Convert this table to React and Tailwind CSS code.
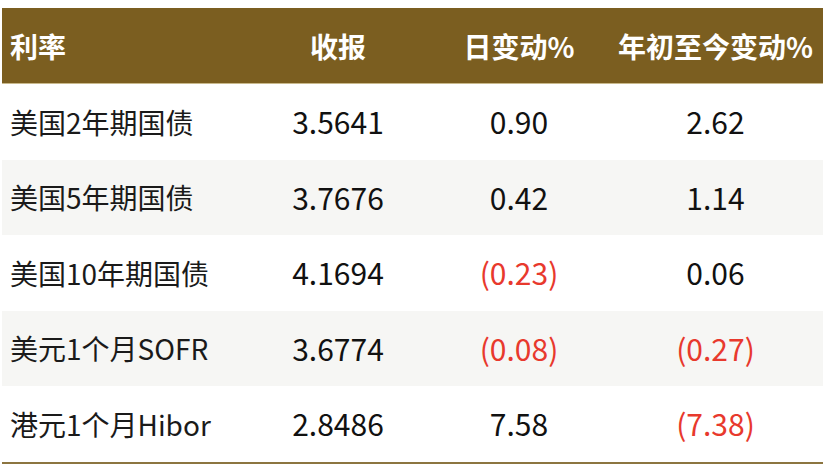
export default function App() {
  const rows = [
    { name: "美国2年期国债", v: "3.5641", d: "0.90", y: "2.62", dn: false, yn: false },
    { name: "美国5年期国债", v: "3.7676", d: "0.42", y: "1.14", dn: false, yn: false },
    { name: "美国10年期国债", v: "4.1694", d: "(0.23)", y: "0.06", dn: true, yn: false },
    { name: "美元1个月SOFR", v: "3.6774", d: "(0.08)", y: "(0.27)", dn: true, yn: true },
    { name: "港元1个月Hibor", v: "2.8486", d: "7.58", y: "(7.38)", dn: false, yn: true },
  ];
  const font = { fontFamily: '"Noto Sans CJK SC", "Noto Sans", sans-serif' };
  return (
    <div className="w-[832px] h-[470px] bg-white pt-[8px] pl-[2px]" style={font}>
      <div className="w-[821px]">
        <div className="grid grid-cols-[244px_184px_178px_215px] h-[76px] bg-[#7b5e20] border-b border-[#c9b98c] text-white font-bold text-[28px] items-center">
          <div className="pl-[8px]">利率</div>
          <div className="text-center">收报</div>
          <div className="text-center">日变动%</div>
          <div className="text-center">年初至今变动%</div>
        </div>
        {rows.map((r, i) => (
          <div
            key={i}
            className={`grid grid-cols-[244px_184px_178px_215px] h-[75.5px] items-center ${i % 2 === 1 ? "bg-[#f6f6f4]" : "bg-white"}`}
          >
            <div className="pl-[8px] text-[28px] text-[#1a1a1a] whitespace-nowrap">{r.name}</div>
            <div className="text-center text-[30px] text-[#111]">{r.v}</div>
            <div className={`text-center text-[30px] ${r.dn ? "text-[#e8392d]" : "text-[#111]"}`}>{r.d}</div>
            <div className={`text-center text-[30px] ${r.yn ? "text-[#e8392d]" : "text-[#111]"}`}>{r.y}</div>
          </div>
        ))}
        <div className="h-[2px] bg-[#8c7540]"></div>
      </div>
    </div>
  );
}
